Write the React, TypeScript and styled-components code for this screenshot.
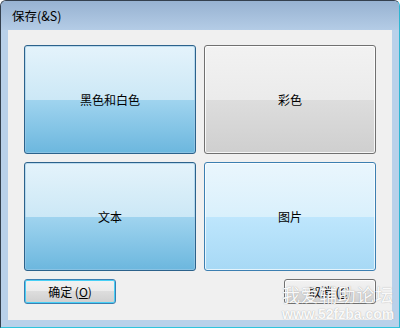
import React from "react";
import styled, { createGlobalStyle, css } from "styled-components";

const Global = createGlobalStyle`
  html, body { margin: 0; padding: 0; background: #ffffff; }
  body { font-family: "Noto Sans CJK SC", "Noto Sans", sans-serif; }
`;

const Window = styled.div`
  position: relative;
  box-sizing: border-box;
  width: 400px;
  height: 328px;
  display: flex;
  flex-direction: column;
  border: 1px solid #34404e;
  border-right-color: #2fb6d2;
  border-bottom-color: #2fc4dc;
  border-radius: 6px 6px 0 0;
  background: #b9d1ea;
  overflow: hidden;
`;

const TitleBar = styled.div`
  height: 29px;
  flex: none;
  display: flex;
  align-items: center;
  padding-left: 11px;
  background: linear-gradient(#97b2d1, #b4cce6);
  font-size: 12.5px;
  color: #000;
`;

const Content = styled.div`
  flex: 1;
  margin: 0 7px 7px 7px;
  background: #f0f0f0;
  padding: 15px 16px 0 16px;
  display: flex;
  flex-direction: column;
`;

const Grid = styled.div`
  display: grid;
  grid-template-columns: 172px 172px;
  grid-template-rows: 109px 109px;
  gap: 8px;
`;

type Variant = "pressed" | "normal" | "hot";

const variants = {
  pressed: css`
    border-color: #2c628b;
    background: linear-gradient(#e4f3fb 0%, #cce8f6 50%, #a0d4ef 50%, #6cb7de 100%);
    box-shadow: inset 0 0 0 1px rgba(158, 202, 230, 0.6);
  `,
  normal: css`
    border-color: #707070;
    background: linear-gradient(#f2f2f2 0%, #ebebeb 50%, #dddddd 50%, #cfcfcf 100%);
    box-shadow: inset 0 0 0 1px rgba(255, 255, 255, 0.8);
  `,
  hot: css`
    border-color: #3c7fb1;
    background: linear-gradient(#eaf6fd 0%, #d9f0fc 50%, #bee6fd 50%, #a7d9f5 100%);
    box-shadow: inset 0 0 0 1px rgba(255, 255, 255, 0.7);
  `,
};

const Tile = styled.div<{ $v: Variant }>`
  box-sizing: border-box;
  border: 1px solid;
  border-radius: 3px;
  display: flex;
  align-items: center;
  justify-content: center;
  font-size: 12px;
  color: #000;
  ${(p) => variants[p.$v]}
`;

const Footer = styled.div`
  margin-top: 8px;
  display: flex;
  justify-content: space-between;
`;

const PushButton = styled.div<{ $focused?: boolean }>`
  box-sizing: border-box;
  width: 92px;
  height: 25px;
  border: 1px solid #707070;
  border-radius: 3px;
  display: flex;
  align-items: center;
  justify-content: center;
  font-size: 12px;
  color: #000;
  background: linear-gradient(#f2f2f2 0%, #ebebeb 50%, #dddddd 50%, #cfcfcf 100%);
  box-shadow: inset 0 0 0 1px rgba(255, 255, 255, 0.8);
  ${(p) =>
    p.$focused &&
    css`
      border-color: #3c7fb1;
      box-shadow: inset 0 0 0 1px #48d0f6;
    `}
`;

const Key = styled.span`
  text-decoration: underline;
`;

const Watermark = styled.div`
  position: absolute;
  left: 281px;
  top: 281px;
  display: flex;
  flex-direction: column;
  align-items: flex-start;
  color: rgba(255, 255, 255, 0.96);
  text-shadow: 0 0 1px rgba(90, 90, 90, 0.55);
  pointer-events: none;
`;

const WmTitle = styled.div`
  font-family: "Noto Sans CJK SC", sans-serif;
  font-size: 18px;
  line-height: 24px;
  letter-spacing: 0.6px;
`;

const WmUrl = styled.div`
  font-family: "Liberation Sans", Arial, sans-serif;
  font-weight: bold;
  font-size: 14px;
  line-height: 16px;
`;

export default function App() {
  return (
    <>
      <Global />
      <Window>
        <TitleBar>保存(&amp;S)</TitleBar>
        <Content>
          <Grid>
            <Tile $v="pressed">黑色和白色</Tile>
            <Tile $v="normal">彩色</Tile>
            <Tile $v="pressed">文本</Tile>
            <Tile $v="hot">图片</Tile>
          </Grid>
          <Footer>
            <PushButton $focused>
              确定 (<Key>O</Key>)
            </PushButton>
            <PushButton>
              取消 (<Key>C</Key>)
            </PushButton>
          </Footer>
        </Content>
        <Watermark>
          <WmTitle>我爱辅助论坛</WmTitle>
          <WmUrl>www.52fzba.com</WmUrl>
        </Watermark>
      </Window>
    </>
  );
}
